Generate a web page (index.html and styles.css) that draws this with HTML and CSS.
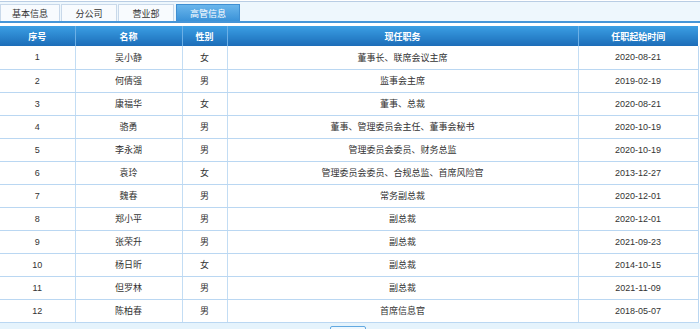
FILE: index.html
```html
<!DOCTYPE html>
<html lang="zh-CN">
<head>
<meta charset="utf-8">
<title>高管信息</title>
<link rel="stylesheet" href="styles.css">
</head>
<body>
<div class="page">
  <div class="tabbar">
    <div class="tab t1">基本信息</div>
    <div class="tab t2">分公司</div>
    <div class="tab t3">营业部</div>
    <div class="tab active">高管信息</div>
  </div>
  <div class="tabline"></div>
  <table class="grid">
    <colgroup>
      <col class="c1"><col class="c2"><col class="c3"><col class="c4"><col class="c5">
    </colgroup>
    <thead>
      <tr><th>序号</th><th>名称</th><th>性别</th><th>现任职务</th><th>任职起始时间</th></tr>
    </thead>
    <tbody>
      <tr><td>1</td><td>吴小静</td><td>女</td><td>董事长、联席会议主席</td><td>2020-08-21</td></tr>
      <tr><td>2</td><td>何倩强</td><td>男</td><td>监事会主席</td><td>2019-02-19</td></tr>
      <tr><td>3</td><td>康福华</td><td>女</td><td>董事、总裁</td><td>2020-08-21</td></tr>
      <tr><td>4</td><td>骆勇</td><td>男</td><td>董事、管理委员会主任、董事会秘书</td><td>2020-10-19</td></tr>
      <tr><td>5</td><td>李永湖</td><td>男</td><td>管理委员会委员、财务总监</td><td>2020-10-19</td></tr>
      <tr><td>6</td><td>袁玲</td><td>女</td><td>管理委员会委员、合规总监、首席风险官</td><td>2013-12-27</td></tr>
      <tr><td>7</td><td>魏春</td><td>男</td><td>常务副总裁</td><td>2020-12-01</td></tr>
      <tr><td>8</td><td>郑小平</td><td>男</td><td>副总裁</td><td>2020-12-01</td></tr>
      <tr><td>9</td><td>张荣升</td><td>男</td><td>副总裁</td><td>2021-09-23</td></tr>
      <tr><td>10</td><td>杨日昕</td><td>女</td><td>副总裁</td><td>2014-10-15</td></tr>
      <tr><td>11</td><td>但罗林</td><td>男</td><td>副总裁</td><td>2021-11-09</td></tr>
      <tr><td>12</td><td>陈柏春</td><td>男</td><td>首席信息官</td><td>2018-05-07</td></tr>
    </tbody>
  </table>
  <div class="pager"><span class="pbtn"></span></div>
</div>
</body>
</html>
```
FILE: styles.css
```css
html, body {
  margin: 0;
  padding: 0;
  background: #ffffff;
}
body {
  font-family: "Liberation Sans", "Noto Sans CJK SC", sans-serif;
  font-size: 9px;
  color: #333333;
  overflow: hidden;
}
.page {
  width: 700px;
  height: 329px;
  overflow: hidden;
}
.tabbar {
  margin-top: 1px;
  height: 20px;
  box-sizing: border-box;
  border-top: 1px solid #b9cde4;
  background: #eef7fd;
  display: flex;
  align-items: flex-end;
  gap: 1px;
  padding-left: 0;
}
.tab {
  height: 17px;
  box-sizing: border-box;
  border: 1px solid #c9d9ea;
  border-bottom: none;
  background: #f8fbfe;
  display: flex;
  align-items: center;
  justify-content: center;
  color: #333333;
}
.t1 { width: 60px; }
.t2 { width: 56px; }
.t3 { width: 56px; margin-right: 1px; }
.tab.active {
  width: 64px;
  border-color: #3f8fd2;
  background: linear-gradient(#6ab6ec, #3a92d8);
  color: #ffffff;
}
.tabline {
  height: 2px;
  background: #4595d7;
  margin-bottom: 3px;
}
.grid {
  width: 698px;
  border-collapse: collapse;
  table-layout: fixed;
}
.c1 { width: 75px; }
.c2 { width: 107px; }
.c3 { width: 45px; }
.c4 { width: 351px; }
.c5 { width: 120px; }
.grid th {
  height: 20px;
  padding: 0;
  box-sizing: border-box;
  background: linear-gradient(#3b9fe4, #1c6db8);
  color: #ffffff;
  font-weight: bold;
  text-align: center;
  border-left: 1px solid #6cb0e6;
}
.grid th:first-child { border-left: none; }
.grid td {
  height: 23px;
  padding: 0;
  box-sizing: border-box;
  text-align: center;
  border-bottom: 1px solid #bad7f2;
  border-left: 1px solid #c3ddf4;
}
.grid td:first-child { border-left: none; }
.grid td:last-child { border-right: 1px solid #bad7f2; }
.pager {
  position: relative;
  height: 10px;
  background: #e5f3fc;
}
.pbtn {
  position: absolute;
  left: 330px;
  top: 3px;
  width: 36px;
  height: 14px;
  box-sizing: border-box;
  border: 1px solid #62a9e1;
  border-radius: 2px;
  background: #eef7fd;
}
```
